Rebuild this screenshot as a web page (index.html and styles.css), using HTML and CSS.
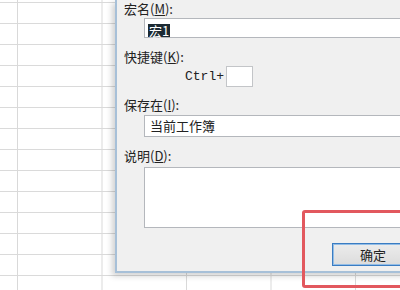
FILE: index.html
```html
<!DOCTYPE html>
<html lang="zh-CN">
<head>
<meta charset="utf-8">
<link rel="stylesheet" href="styles.css">
</head>
<body>
<div class="frame">
  <div class="sheet"></div>
  <div class="dialog">
    <div class="label first">宏名(<u>M</u>):</div>
    <div class="field name"><span class="sel">宏1</span></div>
    <div class="label gap">快捷键(<u>K</u>):</div>
    <div class="hotkey"><span class="ctrl">Ctrl+</span><span class="keybox"></span></div>
    <div class="label gap2">保存在(<u>I</u>):</div>
    <div class="field combo">当前工作簿</div>
    <div class="label gap">说明(<u>D</u>):</div>
    <div class="field desc"></div>
    <div class="actions"><div class="ok">确定</div></div>
  </div>
  <div class="highlight"></div>
</div>
</body>
</html>
```
FILE: styles.css
```css
html, body {
  margin: 0;
  padding: 0;
  background: #ffffff;
  font-family: "Noto Sans CJK SC", "Noto Sans", sans-serif;
}
.frame {
  position: relative;
  width: 400px;
  height: 290px;
  overflow: hidden;
}
.sheet {
  position: absolute;
  left: 0; top: 0; right: 0; bottom: 0;
  background-image:
    linear-gradient(to right, #d9d9d9 1px, transparent 1px),
    linear-gradient(to bottom, #dadada 1px, transparent 1px);
  background-size: 84.5px 100%, 100% 21px;
  background-position: 17px 0, 0 2px;
}
.dialog {
  position: absolute;
  left: 115px;
  top: 0;
  width: 330px;
  height: 271px;
  background: #f0f0f0;
  border-left: 2px solid #a7c0d8;
  border-bottom: 2px solid #a7c0d8;
  box-shadow: -3px 3px 6px rgba(0, 0, 0, 0.18);
  padding-left: 7px;
  color: #222;
  font-size: 13px;
}
.label {
  height: 16px;
  line-height: 16px;
  white-space: nowrap;
}
.first { margin-top: 1px; }
.label u { text-decoration: underline; }
.gap { margin-top: 11px; }
.gap2 { margin-top: 10px; }
.field {
  margin-left: 20px;
  background: #fff;
  border: 1px solid #b4b7bc;
  box-sizing: border-box;
}
.name {
  margin-top: 1px;
  height: 20px;
  padding: 2px 0 0 3px;
}
.sel {
  display: inline-block;
  height: 13px;
  line-height: 13px;
  background: #1c2a33;
  color: #fff;
  padding: 0 1px;
  font-size: 13px;
}
.hotkey {
  margin-top: 1px;
  height: 21px;
  display: flex;
  align-items: center;
  padding-left: 61px;
}
.ctrl {
  font-family: "Liberation Mono", monospace;
  font-size: 13px;
  color: #222;
  width: 41px;
}
.keybox {
  width: 27px;
  height: 21px;
  box-sizing: border-box;
  background: #fff;
  border: 1px solid #c3c5c8;
}
.combo {
  margin-top: 2px;
  height: 22px;
  line-height: 20px;
  padding-left: 5px;
}
.desc {
  margin-top: 3px;
  height: 61px;
}
.actions {
  margin-top: 15px;
  padding-left: 208px;
}
.ok {
  width: 82px;
  height: 23px;
  box-sizing: border-box;
  border: 1px solid #3a7cc2;
  box-shadow: inset 0 0 0 1px #93bde6;
  background: linear-gradient(#ececec, #dcdcdc);
  text-align: center;
  line-height: 21px;
  font-size: 13px;
}
.highlight {
  position: absolute;
  left: 302px;
  top: 210px;
  width: 150px;
  height: 72px;
  border: 3px solid #e2585e;
  border-radius: 3px;
}
```
